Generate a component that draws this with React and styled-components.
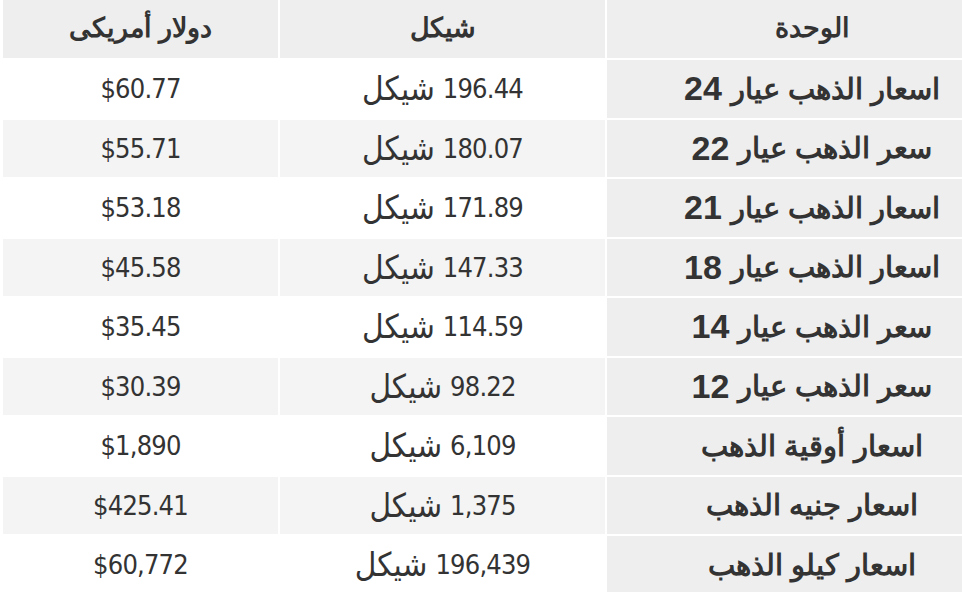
import React from "react";
import styled, { createGlobalStyle } from "styled-components";

const Global = createGlobalStyle`
  html, body { margin: 0; padding: 0; background: #fff; overflow: hidden; }
  body { width: 962px; height: 592px; }
`;

const Wrap = styled.div`
  padding-left: 3px;
  width: 980px;
`;

const Grid = styled.div`
  direction: rtl;
  display: grid;
  grid-template-columns: 376px 325px 275px;
  grid-template-rows: 58px;
  grid-auto-rows: 57.5px;
  gap: 2px;
  color: #333;
`;

const Head = styled.div`
  background: #eee;
  display: flex;
  align-items: center;
  justify-content: center;
  font-family: "Liberation Sans", Arial, sans-serif;
  font-weight: bold;
  font-size: 27px;
  padding-bottom: 2px;
  padding-left: ${(p) => (p.$unit ? "34px" : "0")};
`;

const Unit = styled.div`
  background: #eee;
  display: flex;
  align-items: center;
  justify-content: center;
  gap: 9px;
  padding-left: 34px;
  font-family: "Liberation Sans", Arial, sans-serif;
  font-weight: bold;
  font-size: 29px;
`;

const Karat = styled.span`
  font-size: 34px;
`;

const Value = styled.div`
  background: ${(p) => (p.$alt ? "#f4f4f4" : "#fff")};
  display: flex;
  align-items: center;
  justify-content: center;
  gap: 8px;
  font-family: "DejaVu Sans", sans-serif;
  font-stretch: condensed;
  font-size: 27px;
  letter-spacing: -0.8px;
`;

const Word = styled.span`
  font-size: 33px;
  letter-spacing: 0;
`;

const rows = [
  ["اسعار الذهب عيار", "24", "196.44", "$60.77"],
  ["سعر الذهب عيار", "22", "180.07", "$55.71"],
  ["اسعار الذهب عيار", "21", "171.89", "$53.18"],
  ["اسعار الذهب عيار", "18", "147.33", "$45.58"],
  ["سعر الذهب عيار", "14", "114.59", "$35.45"],
  ["سعر الذهب عيار", "12", "98.22", "$30.39"],
  ["اسعار أوقية الذهب", "", "6,109", "$1,890"],
  ["اسعار جنيه الذهب", "", "1,375", "$425.41"],
  ["اسعار كيلو الذهب", "", "196,439", "$60,772"],
];

export default function App() {
  return (
    <>
      <Global />
      <Wrap>
        <Grid>
          <Head $unit>الوحدة</Head>
          <Head>شيكل</Head>
          <Head>دولار أمريكى</Head>
          {rows.map((r, i) => (
            <React.Fragment key={i}>
              <Unit>
                <span>{r[0]}</span>
                {r[1] && <Karat>{r[1]}</Karat>}
              </Unit>
              <Value $alt={i % 2 === 1}>
                <bdi>{r[2]}</bdi>
                <Word>شيكل</Word>
              </Value>
              <Value $alt={i % 2 === 1}>
                <bdi>{r[3]}</bdi>
              </Value>
            </React.Fragment>
          ))}
        </Grid>
      </Wrap>
    </>
  );
}
